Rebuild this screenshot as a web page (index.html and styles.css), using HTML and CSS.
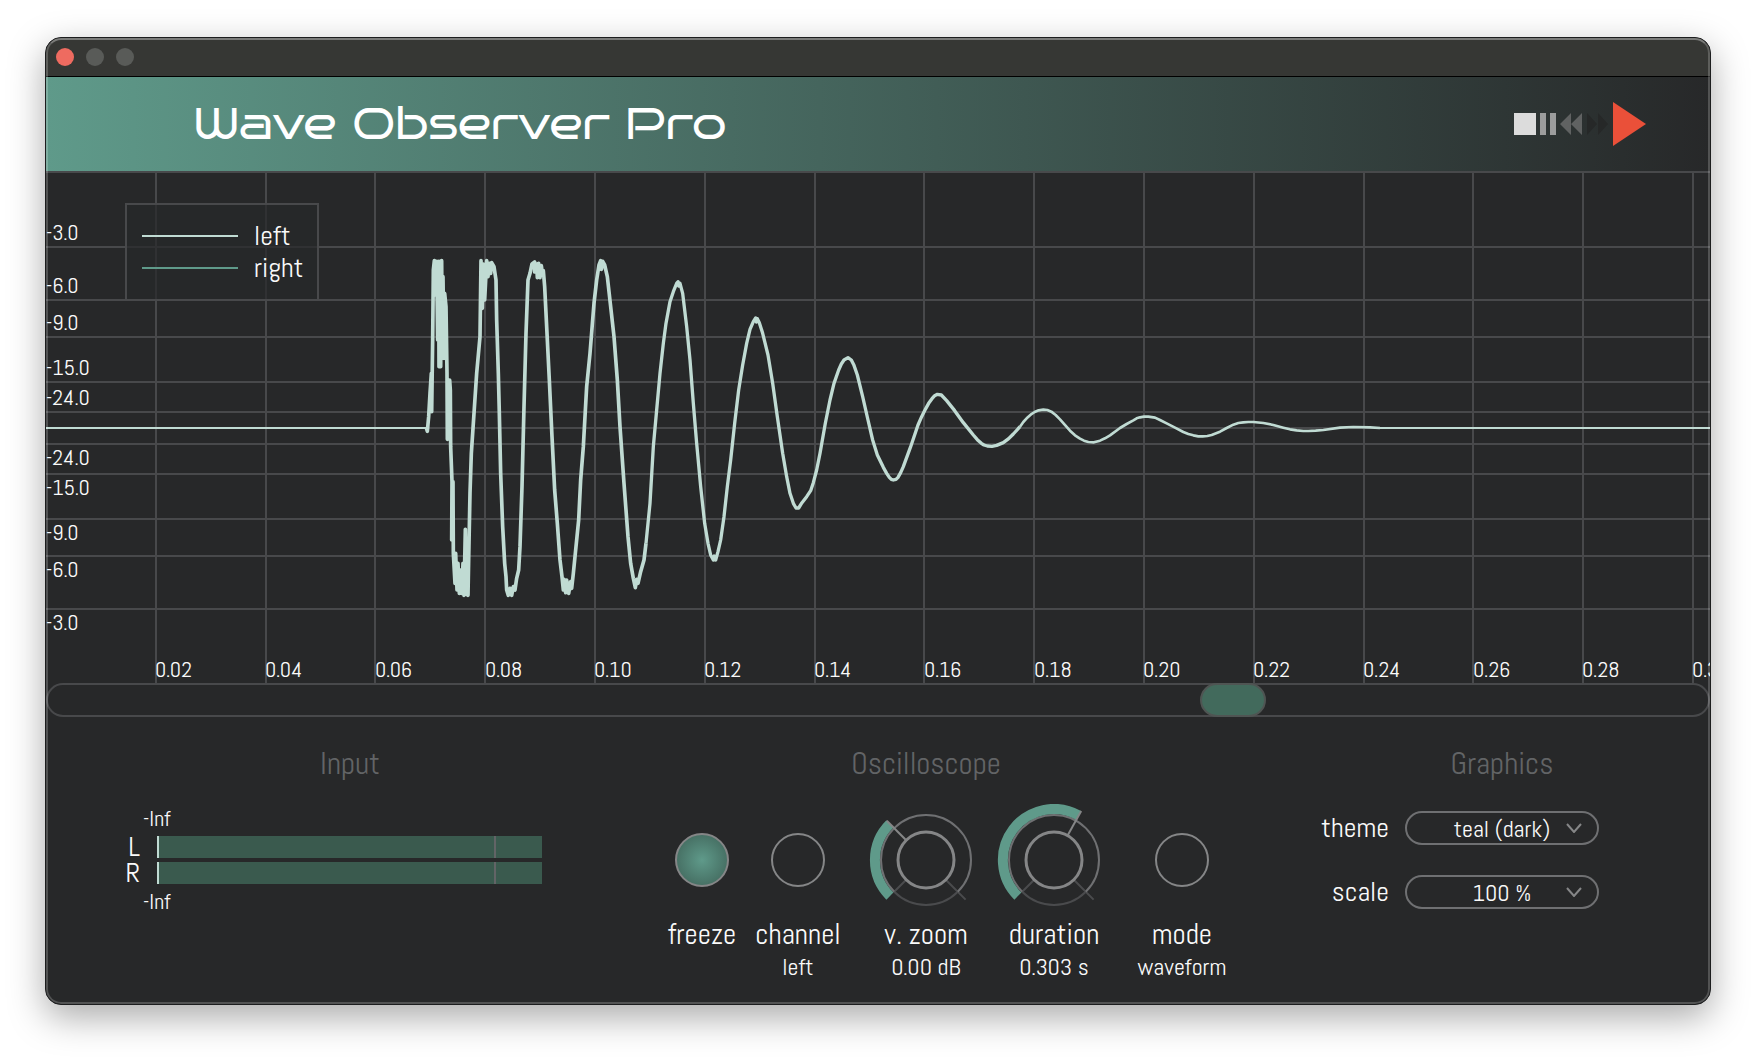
FILE: index.html
```html
<!DOCTYPE html>
<html lang="en">
<head>
<meta charset="utf-8">
<meta name="viewport" content="width=device-width, initial-scale=1">
<title>Wave Observer Pro</title>
<link rel="stylesheet" href="styles.css">
</head>
<body>
<main class="window">
  <div class="titlebar">
    <button class="light light-close" type="button" aria-label="Close"></button>
    <button class="light" type="button" aria-label="Minimize"></button>
    <button class="light" type="button" aria-label="Zoom"></button>
  </div>

  <header class="header">
    <h1 class="title">Wave Observer Pro</h1>
    <div class="transport">
      <button class="icon-button" type="button" aria-label="Stop"><svg width="22" height="22"><rect width="22" height="22" fill="#dcdcdc"/></svg></button>
      <button class="icon-button" type="button" aria-label="Pause"><svg width="16" height="22"><path d="M0 0h6v22H0zM10 0h6v22h-6z" fill="#9c9d9d"/></svg></button>
      <button class="icon-button" type="button" aria-label="Rewind"><svg width="22" height="22"><path d="M11 0v22L0 11zM22 0v22L11 11z" fill="#606262"/></svg></button>
      <button class="icon-button" type="button" aria-label="Fast forward"><svg width="22" height="22"><path d="M1 0v22l10-11zM12 0v22l10-11z" fill="#262828"/></svg></button>
      <button class="icon-button" type="button" aria-label="Play"><svg width="34" height="44"><path d="M1 0v44l33-22z" fill="#ea5039"/></svg></button>
    </div>
  </header>

  <svg class="chart" viewBox="0 0 1664 510" role="img" aria-label="Waveform">
    <path class="grid-line" d="M110 0V510M220 0V510M329 0V510M439 0V510M549 0V510M659 0V510M769 0V510M878 0V510M988 0V510M1098 0V510M1208 0V510M1318 0V510M1427 0V510M1537 0V510M1647 0V510"/>
    <path class="grid-line" d="M0 74H1664M0 127H1664M0 164H1664M0 209H1664M0 239H1664M0 255H1664M0 271H1664M0 301H1664M0 346H1664M0 383H1664M0 436H1664"/>
    <g class="axis-text">
      <text x="0" y="67">-3.0</text>
      <text x="0" y="120">-6.0</text>
      <text x="0" y="157">-9.0</text>
      <text x="0" y="202">-15.0</text>
      <text x="0" y="232">-24.0</text>
      <text x="0" y="292">-24.0</text>
      <text x="0" y="322">-15.0</text>
      <text x="0" y="367">-9.0</text>
      <text x="0" y="404">-6.0</text>
      <text x="0" y="457">-3.0</text>
      <text x="109" y="504">0.02</text>
      <text x="219" y="504">0.04</text>
      <text x="329" y="504">0.06</text>
      <text x="439" y="504">0.08</text>
      <text x="548" y="504">0.10</text>
      <text x="658" y="504">0.12</text>
      <text x="768" y="504">0.14</text>
      <text x="878" y="504">0.16</text>
      <text x="988" y="504">0.18</text>
      <text x="1097" y="504">0.20</text>
      <text x="1207" y="504">0.22</text>
      <text x="1317" y="504">0.24</text>
      <text x="1427" y="504">0.26</text>
      <text x="1536" y="504">0.28</text>
      <text x="1646" y="504">0.30</text>
    </g>

    <path class="trace trace-flat" d="M0 255H380"/>
    <path class="trace trace-flat" d="M1332 255H1664"/>
    <g transform="translate(354 67) scale(.33333)">
      <path class="trace trace-attack" d="M79 564L82 574 86 530 90 460 94 400 95 515 98 300 100 90 103 62 108 165 110 64 113 300 116 64 117 380 120 64 122 380 125 62 127 355 129 110 132 355 134 160 138 200 141 400 142 598 147 500 149 420 151 450 152 620 156 725 155 900 159 725 160 940 165 1030 167 940 171 1050 174 970 178 1060 182 990 185 1060 189 970 192 1066 196 868 199 1063 201 960 204 1066 206 960 210 760 214 640 222 520 230 400 240 290 243 62 247 205 250 72 254 180 260 62 264 110 268 70 272 100 275 68 282 80 288 120 290 240 295 400 298 520 302 700 308 860 314 970 318 1010 320 1050 325 1066 330 1045 335 1066 340 1040 345 1050 350 1015 356 990 360 920 366 740 372 500 378 280 384 120 390 100 396 72 404 66 404 96 410 72 412 113 416 70 420 113 424 77 428 106 430 92 434 140 440 260 448 420 456 590 464 750 472 850 480 960 486 1010 490 1050 492 1018 497 1058 500 1020 506 1060 512 1025 515 1045 520 1000 528 920 536 840 542 720 550 620 560 440 570 340 582 190 590 120 597 75 602 62 604 88 608 64 614 75 622 110 632 200 642 290 652 420 660 560 672 730 684 890 692 970 700 1015 706 1043 710 1018 714 1030 722 995 732 960 738 910"/>
      <g transform="translate(720 0)">
        <path class="trace" d="M18 910L30 790 40 620 50 510 60 400 70 310 78 250 90 185 100 155 110 130 114 125 116 138 120 130 128 160 140 260 150 360 160 490 170 610 182 740 194 850 204 910 212 945 220 960 223 948 227 960 234 935 242 900 252 830 262 740 272 660 284 550 296 450 308 375 320 310 330 268 340 245 347 234 349 246 352 236 358 248 368 280 384 345 398 430 412 530 428 640 440 710 450 760 460 790 468 804 476 804 486 788 500 770 512 752 520 728 530 690 540 640 556 550 570 480 582 430 596 390 604 372 612 360 624 353 634 360 642 376 652 405 668 470 684 540 698 600 712 645 730 682 740 700 748 712 754 718 760 720 768 718 774 712 782 698 790 680 812 620 834 555 845 530 856 508 866 490 876 476 884 467 892 463 904 465 920 482 944 512 970 548 1000 585 1012 599 1024 610 1032 615 1042 618 1056 619 1070 616 1090 608 1106 596 1120 582 1140 560"/>
      </g>
      <g transform="translate(1860 360)">
        <path class="trace trace-tail" d="M0 200L10 186 20 175 32 164 44 156 56 151 70 149 82 150 94 155 107 165 120 178 150 212 165 226 180 236 192 242 205 246 222 247 240 242 255 235 270 226 300 204 320 192 340 181 350 175 360 172 372 170 385 170 405 173 420 180 440 190 465 203 490 216 505 222 520 226 535 229 548 229 562 228 575 225 600 215 620 204 640 194 655 189 670 187 685 186 700 186 730 189 760 195 790 203 810 208 830 211 850 213 865 213 887 212 910 210 960 203 1000 201 1050 202 1080 204"/>
      </g>
    </g>

    <g>
      <rect class="legend-box" x="80" y="31" width="192" height="96"/>
      <path class="legend-left" d="M96 63h96"/>
      <path class="legend-right" d="M96 95h96"/>
      <text class="legend-text" x="208" y="72">left</text>
      <text class="legend-text" x="208" y="104">right</text>
    </g>
  </svg>

  <input class="scroller" type="range" min="0" max="1000" value="722" aria-label="Time position">

  <div class="controls">
    <section class="group input-group">
      <h2 class="group-title">Input</h2>
      <div class="levels">
        <span class="peak">-Inf</span>
        <div class="level"><span>L</span><div class="bar" role="meter" aria-label="Left level" aria-valuenow="0"></div></div>
        <div class="level"><span>R</span><div class="bar" role="meter" aria-label="Right level" aria-valuenow="0"></div></div>
        <span class="peak">-Inf</span>
      </div>
    </section>

    <section class="group scope-group">
      <h2 class="group-title">Oscilloscope</h2>
      <div class="dials">
        <div class="dial">
          <div class="dial-face"><button class="round round-on" id="freeze" type="button" aria-pressed="true"></button></div>
          <label class="dial-name" for="freeze">freeze</label>
        </div>
        <div class="dial">
          <div class="dial-face"><button class="round" id="channel" type="button"></button></div>
          <label class="dial-name" for="channel">channel</label>
          <span class="dial-value">left</span>
        </div>
        <div class="dial dial-wide dial-first">
          <div class="dial-face">
            <svg class="knob" viewBox="-60 -56 120 112" aria-hidden="true">
              <path class="ring-rest" d="M31.8 31.8A45 45 0 0 1 -31.8 31.8M-19.8 19.8L-31.8 31.8M19.8 19.8L39.6 39.6"/>
              <path class="ring" d="M-31.8 31.8A45 45 0 1 1 31.8 31.8"/>
              <path class="ring-value" d="M-36.1 36.1A51 51 0 0 1 -36.1 -36.1"/>
              <path class="pointer" d="M-19.8 -19.8L-39.2 -39.2"/>
              <circle class="hub" r="28"/>
            </svg>
            <input class="knob-input" id="zoom" type="range" min="0" max="100" value="33">
          </div>
          <label class="dial-name" for="zoom">v. zoom</label>
          <span class="dial-value">0.00 dB</span>
        </div>
        <div class="dial dial-wide">
          <div class="dial-face">
            <svg class="knob" viewBox="-60 -56 120 112" aria-hidden="true">
              <path class="ring-rest" d="M31.8 31.8A45 45 0 0 1 -31.8 31.8M-19.8 19.8L-31.8 31.8M19.8 19.8L39.6 39.6"/>
              <path class="ring" d="M-31.8 31.8A45 45 0 1 1 31.8 31.8"/>
              <path class="ring-value" d="M-36.1 36.1A51 51 0 0 1 24.7 -44.6"/>
              <path class="pointer" d="M13.6 -24.5L27.2 -49"/>
              <circle class="hub" r="28"/>
            </svg>
            <input class="knob-input" id="duration" type="range" min="0" max="100" value="61">
          </div>
          <label class="dial-name" for="duration">duration</label>
          <span class="dial-value">0.303 s</span>
        </div>
        <div class="dial dial-last">
          <div class="dial-face"><button class="round" id="mode" type="button"></button></div>
          <label class="dial-name" for="mode">mode</label>
          <span class="dial-value">waveform</span>
        </div>
      </div>
    </section>

    <section class="group graphics-group">
      <h2 class="group-title">Graphics</h2>
      <div class="options">
        <label class="option-name" for="theme">theme</label>
        <div class="picker">
          <select id="theme"><option>teal (dark)</option></select>
          <svg class="chevron" width="16" height="10"><path d="M1 1l7 8 7-8"/></svg>
        </div>
        <label class="option-name" for="scale">scale</label>
        <div class="picker">
          <select id="scale"><option>100 %</option></select>
          <svg class="chevron" width="16" height="10"><path d="M1 1l7 8 7-8"/></svg>
        </div>
      </div>
    </section>
  </div>
</main>
</body>
</html>
```

FILE: styles.css
```css
:root {
  --ground: #272829;
  --line: #48494b;
  --dim: #626466;
  --mid: #6f7072;
  --bright: #858687;
  --teal: #5f9a8a;
  --pale: #c0dbd3;
  --text: #fafafa;
}

* {
  box-sizing: border-box;
}

body {
  margin: 0;
  padding: 37px 45px 53px;
  background: #fff;
  color: var(--text);
  font-family: "Abel", "Liberation Sans Narrow", "Roboto Condensed", "Open Sans Condensed", "Liberation Sans", sans-serif;
}

button,
input,
select {
  margin: 0;
  padding: 0;
  border: 0;
  background: none;
  color: inherit;
  font: inherit;
  appearance: none;
}

.window {
  position: relative;
  overflow: hidden;
  border: 1px solid #1c1d1e;
  border-radius: 16px;
  background: var(--ground);
  box-shadow: 0 12px 36px rgba(0, 0, 0, .34);
}

/* bright rim lying over the whole window */
.window::after {
  content: "";
  position: absolute;
  inset: 0;
  border: 2px solid rgba(255, 255, 255, .2);
  border-top-color: rgba(255, 255, 255, .34);
  border-radius: 15px;
  pointer-events: none;
}

.titlebar {
  display: flex;
  align-items: center;
  gap: 12px;
  height: 39px;
  padding-left: 10px;
  border-bottom: 1px solid #000;
  background: #363734;
}

.light {
  width: 18px;
  height: 18px;
  border-radius: 50%;
  background: #595b58;
}

.light-close {
  background: #ee6b60;
}

.header {
  display: flex;
  align-items: center;
  justify-content: space-between;
  height: 96px;
  padding: 0 64px 0 147px;
  border-bottom: 2px solid var(--line);
  background: linear-gradient(90deg, #5f9a8a, #272829);
}

.title {
  margin: 0;
  color: #fff;
  font-family: "Bruno Ace", "Gruppo", "DejaVu Sans", sans-serif;
  font-size: 44px;
  font-weight: 400;
  line-height: 56px;
}

.transport {
  display: flex;
  align-items: center;
  gap: 4px;
}

.icon-button {
  display: flex;
}

.chart {
  display: block;
  width: 100%;
}

.grid-line {
  fill: none;
  stroke: var(--line);
  stroke-width: 2;
}

.axis-text {
  fill: var(--text);
  font-size: 22px;
}

.trace {
  fill: none;
  stroke: var(--pale);
  stroke-width: 10;
  stroke-linejoin: round;
}

.trace-attack {
  stroke-width: 11;
}

.trace-tail {
  stroke-width: 8;
}

.trace-flat {
  stroke-width: 2;
}

.legend-box {
  fill: rgba(39, 40, 41, .7);
  stroke: var(--line);
  stroke-width: 2;
}

.legend-left,
.legend-right {
  stroke: var(--pale);
  stroke-width: 2;
}

.legend-right {
  stroke: var(--teal);
}

.legend-text {
  fill: var(--text);
  font-size: 28px;
}

.scroller {
  display: block;
  width: 100%;
  height: 34px;
  border-radius: 17px;
  box-shadow: inset 0 0 0 2px var(--line);
}

.scroller::-webkit-slider-thumb {
  appearance: none;
  width: 66px;
  height: 34px;
  border: 2px solid #4f5553;
  border-radius: 17px;
  background: #426a5c;
}

.controls {
  display: grid;
  grid-template-columns: 576fr 608fr 480fr;
  padding: 28px 0 23px;
}

.group-title {
  margin: 0;
  color: var(--dim);
  font-size: 31px;
  font-weight: 400;
  line-height: 38px;
  text-align: center;
}

.input-group .group-title {
  padding-left: 32px;
}

.graphics-group .group-title {
  padding-left: 64px;
}

.levels {
  display: grid;
  gap: 4px;
  padding: 22px 80px 0 71px;
}

.peak {
  padding-left: 26px;
  font-size: 22px;
  line-height: 27px;
}

.level {
  display: grid;
  grid-template-columns: 23px 1fr;
  gap: 17px;
  height: 22px;
  font-size: 28px;
  line-height: 22px;
  text-align: right;
}

/* level fill with the -6 dB mark and the peak hold at the left end */
.bar {
  border-left: 2px solid var(--pale);
  background: linear-gradient(90deg, transparent 87.5%, var(--dim) 87.5%, var(--dim) 88%, transparent 88%) #3a5a4e;
}

.dials {
  display: flex;
  justify-content: flex-end;
}

.dial {
  display: flex;
  flex-direction: column;
  align-items: center;
  width: 96px;
}

.dial-wide {
  width: 128px;
}

.dial-first,
.dial-last {
  margin-left: 16px;
}

.dial-face {
  position: relative;
  display: flex;
  align-items: center;
  justify-content: center;
  height: 112px;
  margin-top: 21px;
}

.round {
  width: 54px;
  height: 54px;
  border: 2px solid var(--bright);
  border-radius: 50%;
}

.round-on {
  background: radial-gradient(circle, #5f9a8a, #3b5c52 100%);
  background-origin: border-box;
}

.knob {
  width: 120px;
  height: 112px;
  fill: none;
  stroke-width: 2;
}

.knob-input {
  position: absolute;
  inset: 0;
  width: 100%;
  opacity: 0;
}

.ring-rest {
  stroke: #4a4b4d;
}

.ring {
  stroke: var(--mid);
}

.ring-value {
  stroke: var(--teal);
  stroke-width: 10;
}

.pointer {
  stroke: var(--bright);
}

.hub {
  stroke: var(--bright);
  stroke-width: 3;
}

.dial-name {
  font-size: 29px;
  line-height: 37px;
  white-space: nowrap;
}

.dial-value {
  font-size: 24px;
  line-height: 28px;
  white-space: nowrap;
}

.options {
  display: grid;
  grid-template-columns: 159px 194px;
  gap: 30px 16px;
  padding-top: 28px;
}

.option-name {
  font-size: 28px;
  line-height: 34px;
  text-align: right;
}

.picker {
  position: relative;
}

.picker select {
  display: block;
  width: 100%;
  height: 34px;
  padding-bottom: 2px;
  border: 2px solid var(--mid);
  border-radius: 17px;
  font-size: 24px;
  text-align: center;
  text-align-last: center;
}

.chevron {
  position: absolute;
  top: 12px;
  right: 17px;
  fill: none;
  stroke: var(--bright);
  stroke-width: 2;
  pointer-events: none;
}
```
